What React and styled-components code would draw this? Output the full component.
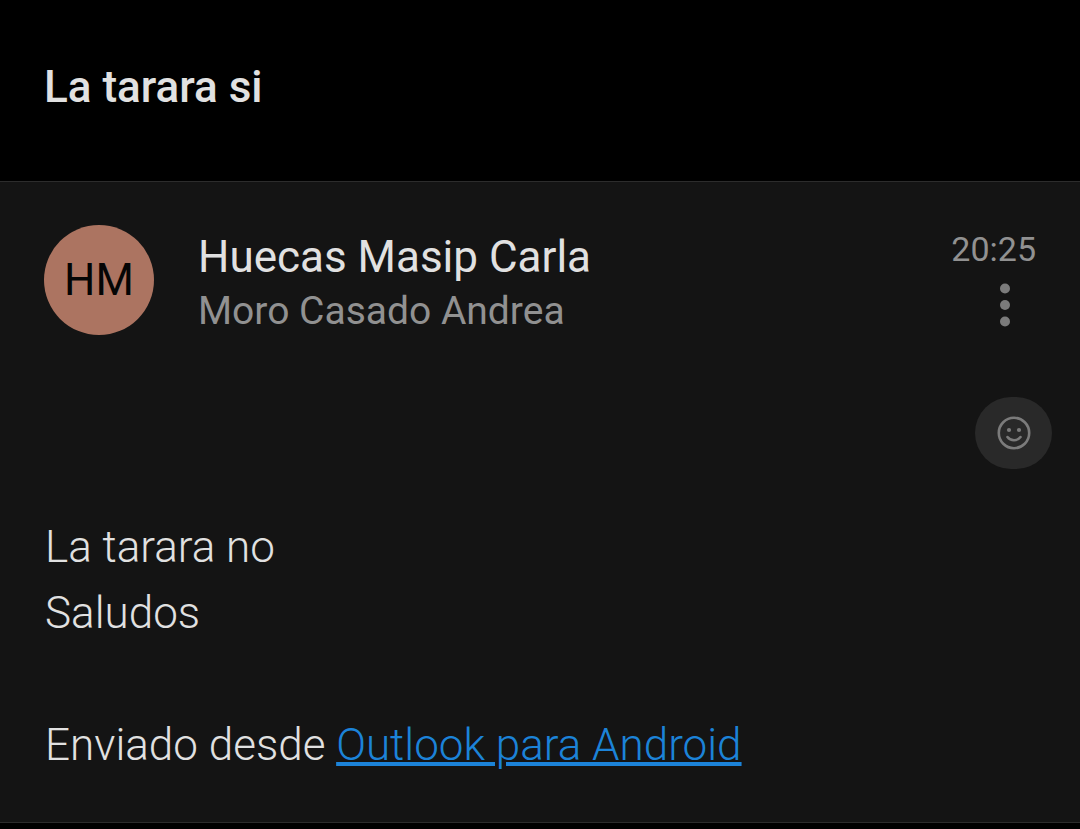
import React from "react";
import styled, { createGlobalStyle } from "styled-components";

const GlobalStyle = createGlobalStyle`
  * { box-sizing: border-box; }
  body { margin: 0; background: #000; color: #e1e1e1; font-family: Roboto, "Noto Sans", sans-serif; }
`;

const Header = styled.header`
  padding: 59px 44px 66px;
  border-bottom: 1px solid #2c2c2c;
`;

const Subject = styled.h1`
  margin: 0;
  font-size: 44px;
  line-height: 56px;
  font-weight: 500;
`;

const Message = styled.article`
  background: #141414;
  border-bottom: 1px solid #2c2c2c;
  padding-bottom: 44px;
`;

const SenderRow = styled.div`
  display: flex;
  gap: 44px;
  padding: 43px 44px 0;
`;

const Avatar = styled.div`
  display: flex;
  align-items: center;
  justify-content: center;
  flex: none;
  width: 110px;
  height: 110px;
  border-radius: 50%;
  background: #ac7461;
  color: #050505;
  font-size: 44px;
`;

const People = styled.div`
  flex: 1;
  padding-top: 4px;
`;

const Sender = styled.div`
  font-size: 44px;
  line-height: 56px;
`;

const Recipient = styled.div`
  font-size: 39px;
  line-height: 52px;
  color: #919191;
`;

const Meta = styled.div`
  display: flex;
  flex-direction: column;
  align-items: flex-end;
`;

const Time = styled.time`
  font-size: 34px;
  line-height: 48px;
  color: #919191;
`;

const IconButton = styled.button`
  display: flex;
  align-items: center;
  justify-content: center;
  border: 0;
  padding: 0;
  color: #7b7b7b;
  background: transparent;
  cursor: pointer;
`;

const MoreButton = styled(IconButton)`
  width: 62px;
  height: 64px;
`;

const Reactions = styled.div`
  display: flex;
  justify-content: flex-end;
  padding: 60px 28px 0;
`;

const ReactButton = styled(IconButton)`
  width: 77px;
  height: 72px;
  border-radius: 36px;
  background: #292929;
`;

const Body = styled.div`
  padding: 45px 45px 0;
  font-size: 44px;
  line-height: 66px;
  font-weight: 300;
`;

const Paragraph = styled.p`
  margin: 0;
`;

const Signature = styled(Paragraph)`
  padding-top: 66px;
`;

const Link = styled.a`
  color: #1c83d8;
  text-decoration-thickness: 4px;
`;

export default function App() {
  return (
    <main>
      <GlobalStyle />
      <Header>
        <Subject>La tarara si</Subject>
      </Header>
      <Message>
        <SenderRow>
          <Avatar>HM</Avatar>
          <People>
            <Sender>Huecas Masip Carla</Sender>
            <Recipient>Moro Casado Andrea</Recipient>
          </People>
          <Meta>
            <Time>20:25</Time>
            <MoreButton aria-label="Más opciones">
              <svg width="12" height="44" viewBox="0 0 12 44" fill="currentColor">
                <circle cx="6" cy="5.5" r="5" />
                <circle cx="6" cy="22" r="5" />
                <circle cx="6" cy="38.5" r="5" />
              </svg>
            </MoreButton>
          </Meta>
        </SenderRow>
        <Reactions>
          <ReactButton aria-label="Reaccionar">
            <svg width="34" height="34" viewBox="0 0 34 34" fill="none" stroke="currentColor" strokeWidth="2.6" strokeLinecap="round">
              <circle cx="17" cy="17" r="15.2" />
              <path d="M10.5 21c3.2 4.3 9.8 4.3 13 0" />
              <circle cx="12" cy="14" r="2.1" fill="currentColor" stroke="none" />
              <circle cx="22" cy="14" r="2.1" fill="currentColor" stroke="none" />
            </svg>
          </ReactButton>
        </Reactions>
        <Body>
          <Paragraph>La tarara no</Paragraph>
          <Paragraph>Saludos</Paragraph>
          <Signature>
            Enviado desde <Link href="#outlook">Outlook para Android</Link>
          </Signature>
        </Body>
      </Message>
    </main>
  );
}
